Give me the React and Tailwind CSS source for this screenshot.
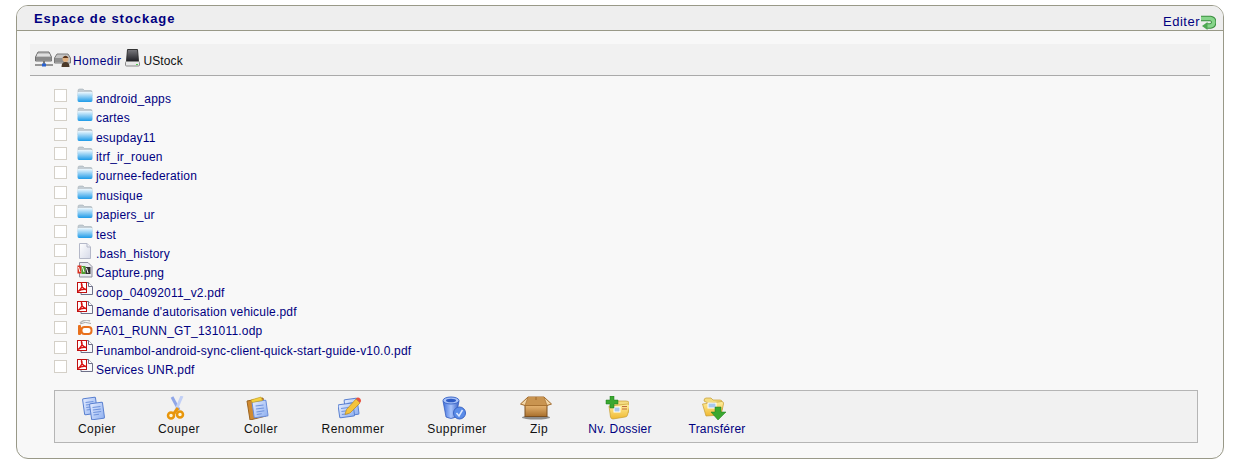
const FONT = "font-['Liberation_Sans',Arial,sans-serif]";

const files = [
  ['android_apps', 'folder'],
  ['cartes', 'folder'],
  ['esupday11', 'folder'],
  ['itrf_ir_rouen', 'folder'],
  ['journee-federation', 'folder'],
  ['musique', 'folder'],
  ['papiers_ur', 'folder'],
  ['test', 'folder'],
  ['.bash_history', 'text'],
  ['Capture.png', 'image'],
  ['coop_04092011_v2.pdf', 'pdf'],
  ["Demande d'autorisation vehicule.pdf", 'pdf'],
  ['FA01_RUNN_GT_131011.odp', 'odp'],
  ['Funambol-android-sync-client-quick-start-guide-v10.0.pdf', 'pdf'],
  ['Services UNR.pdf', 'pdf'],
];

function Gradients() {
  return (
    <svg width="0" height="0" className="absolute">
      <defs>
        <linearGradient id="blueFolder" x1="0" y1="0" x2="0" y2="1">
          <stop offset="0" stopColor="#eef8fe" />
          <stop offset="1" stopColor="#1e9be8" />
        </linearGradient>
        <linearGradient id="sheet" x1="0" y1="0" x2="1" y2="1">
          <stop offset="0" stopColor="#ffffff" />
          <stop offset="1" stopColor="#d5d9e8" />
        </linearGradient>
        <linearGradient id="bluePage" x1="0" y1="0" x2="1" y2="1">
          <stop offset="0" stopColor="#e4ecff" />
          <stop offset="1" stopColor="#8fb0f0" />
        </linearGradient>
        <linearGradient id="binBlue" x1="0" y1="0" x2="1" y2="0">
          <stop offset="0" stopColor="#3f6fdc" />
          <stop offset="0.5" stopColor="#a9c4fb" />
          <stop offset="1" stopColor="#3a62c8" />
        </linearGradient>
        <linearGradient id="box" x1="0" y1="0" x2="0" y2="1">
          <stop offset="0" stopColor="#e9b774" />
          <stop offset="1" stopColor="#a86f2c" />
        </linearGradient>
        <linearGradient id="yellowFolder" x1="0" y1="0" x2="0" y2="1">
          <stop offset="0" stopColor="#fff0a0" />
          <stop offset="1" stopColor="#f0b830" />
        </linearGradient>
        <linearGradient id="drive" x1="0" y1="0" x2="0" y2="1">
          <stop offset="0" stopColor="#7b7b7f" />
          <stop offset="1" stopColor="#1d1d22" />
        </linearGradient>
      </defs>
    </svg>
  );
}

function FileIcon({ type }) {
  if (type === 'folder') {
    return (
      <svg width="16" height="16" viewBox="0 0 16 16">
        <path d="M1 2.500Q1 1 2.500 1H6L7.500 2.500H14Q15 2.500 15 4V8H1Z" fill="#c4cdd4" stroke="#9aa6ae" strokeWidth=".5" />
        <path d="M.5 5Q.5 4 1.500 4H14.500Q15.500 4 15.500 5V12Q15.500 14 14 14H2Q.5 14 .5 12Z" fill="url(#blueFolder)" />
      </svg>
    );
  }
  if (type === 'text') {
    return (
      <svg width="16" height="16" viewBox="0 0 16 16">
        <path d="M2.500.5H10L13.500 4V15.500H2.500Z" fill="url(#sheet)" stroke="#b4b8c8" />
        <path d="M10 .5V4H13.500" fill="#eef0f6" stroke="#b4b8c8" />
      </svg>
    );
  }
  if (type === 'image') {
    return (
      <svg width="16" height="16" viewBox="0 0 16 16">
        <path d="M2.500.5H11L15 4.500V15H2.500Z" fill="#e8e8f0" stroke="#8d8d9c" />
        <rect x=".5" y="3.500" width="4" height="8" fill="#d83020" />
        <rect x="4.500" y="4" width="4" height="8" fill="#50a030" />
        <rect x="8.500" y="5" width="5" height="7" fill="#303030" />
        <path d="M1.500 5L3 10M5.500 5L7 10M9.500 6L11 11" stroke="#fff" />
      </svg>
    );
  }
  if (type === 'pdf') {
    return (
      <svg width="16" height="16" viewBox="0 0 16 16">
        <path d="M4 .5H11.500L15.500 4.500V12.500H4Z" fill="#f7f7fb" stroke="#6e7088" />
        <path d="M11.500.5V4.500H15.500" fill="#fff" stroke="#6e7088" />
        <rect x=".5" y=".5" width="9" height="10" fill="#fff" stroke="#c01010" />
        <path d="M1 9.500C4 7 6 4 4.500 1.500C4 4 6 7 9 7.500C6 7 3 8 1 9.500Z" fill="none" stroke="#d81010" strokeWidth="1.300" />
      </svg>
    );
  }
  return (
    <svg width="16" height="16" viewBox="0 0 16 16">
      <path d="M3 3Q8 -1.500 13 1" fill="none" stroke="#b8b8b8" strokeWidth="1.500" />
      <path d="M3 4Q8 1 14 3.500" fill="none" stroke="#a8a8a8" />
      <rect x="1" y="5" width="3" height="10" rx="1" fill="#e8701c" />
      <rect x="4.500" y="7" width="10" height="7" rx="3" fill="#fff" stroke="#e8701c" strokeWidth="2" />
    </svg>
  );
}

function Server() {
  return (
    <svg width="18" height="16" viewBox="0 0 18 16">
      <path d="M3 1H14L16.500 6V10H.5V6Z" fill="#c0c0c0" stroke="#6f6f6f" />
      <rect x="1" y="6" width="15.500" height="3.500" fill="#8a8a8a" />
      <path d="M2 4H15" stroke="#fff" />
      <path d="M0 14H18" stroke="#777" strokeWidth="1.500" />
      <rect x="8" y="10" width="2" height="3" fill="#777" />
      <rect x="7" y="12.500" width="4" height="3" fill="#2b62d0" />
    </svg>
  );
}

function HomeDrive() {
  return (
    <svg width="17" height="16" viewBox="0 0 17 16">
      <path d="M3 2H14L16.500 6V11H.5V6Z" fill="#c4c4c4" stroke="#7a7a7a" />
      <rect x="1" y="6" width="9" height="4" fill="#8f8f8f" />
      <circle cx="11.500" cy="7" r="3" fill="#e0b080" />
      <path d="M8.500 6Q11.500 1.500 14.500 6Z" fill="#5a3418" />
      <path d="M7.500 15Q7.500 10 11.500 10Q15.500 10 15.500 15Z" fill="#4c3a2a" />
    </svg>
  );
}

function UsbDrive() {
  return (
    <svg width="15" height="18" viewBox="0 0 15 18">
      <path d="M2.500.5H12.500L13.500 12.500H1.500Z" fill="url(#drive)" stroke="#333" />
      <rect x=".5" y="12.500" width="14" height="4.500" rx="1" fill="#e8e8e8" stroke="#8a8a8a" />
      <rect x="11" y="15" width="2" height="1" fill="#50d050" />
    </svg>
  );
}

function EditArrow() {
  return (
    <svg width="15" height="15" viewBox="0 0 15 15" className="mt-[2px]">
      <path d="M0 3.500H9.500A3.800 3.800 0 0 1 9.500 11H5" fill="none" stroke="#3b8f40" strokeWidth="5.500" />
      <path d="M0 3.500H9.500A3.800 3.800 0 0 1 9.500 11H5" fill="none" stroke="#86d48a" strokeWidth="3.500" />
      <path d="M6.500 7V15L1 11Z" fill="#4ea853" />
    </svg>
  );
}

function Page({ x, y }) {
  return (
    <g transform={`translate(${x} ${y}) rotate(-8)`}>
      <rect width="13" height="16" rx="1" fill="url(#bluePage)" stroke="#5a80d0" />
      <path d="M2.500 4H10.500M2.500 6.500H10.500M2.500 9H10.500M2.500 11.500H8" stroke="#6f93dc" />
    </g>
  );
}

function ToolIcon({ name }) {
  if (name === 'copy') {
    return (
      <svg width="24" height="24" viewBox="0 0 24 24">
        <Page x={.5} y={3} />
        <Page x={7.500} y={8} />
      </svg>
    );
  }
  if (name === 'cut') {
    return (
      <svg width="24" height="24" viewBox="-3 0 24 24">
        <path d="M5 1L12 14" stroke="#8fa6e8" strokeWidth="3" />
        <path d="M15 0L9 14" stroke="#c2d0f6" strokeWidth="3" />
        <path d="M11 12L5 20" stroke="#e8960c" strokeWidth="3" />
        <circle cx="4" cy="19.500" r="3" fill="#fff7d8" stroke="#e8960c" strokeWidth="2.500" />
        <circle cx="13" cy="18.500" r="3" fill="#fff7d8" stroke="#e8960c" strokeWidth="2.500" />
      </svg>
    );
  }
  if (name === 'paste') {
    return (
      <svg width="24" height="24" viewBox="0 0 24 24">
        <path d="M1 5L17 2L20 20L4 24Z" fill="#d08a30" stroke="#9c6420" />
        <g transform="translate(6 6) rotate(-8)">
          <rect width="14" height="16" rx="1" fill="url(#bluePage)" stroke="#6c8ed8" />
          <path d="M3 4.500H11M3 7.500H11M3 10.500H11M3 13H8" stroke="#6f93dc" />
        </g>
        <path d="M5 4L15 1L16.500 4.500L6 6.500Z" fill="#f4d040" stroke="#c09a20" strokeWidth=".6" />
      </svg>
    );
  }
  if (name === 'rename') {
    return (
      <svg width="24" height="24" viewBox="0 0 24 24">
        <Page x={6} y={4} />
        <g transform="translate(0 9) rotate(-8)">
          <rect width="15" height="13" rx="1" fill="url(#bluePage)" stroke="#5a80d0" />
          <path d="M2.500 4H12M2.500 7H12M2.500 10H9" stroke="#6f93dc" />
        </g>
        <path d="M18 3L22 7L12 17L7 18.500L8.500 13.500Z" fill="#f5c33c" stroke="#b88a20" strokeWidth=".7" />
        <path d="M18 2.500Q20 .5 22.500 3Q24 5 22 7Z" fill="#e8503c" />
      </svg>
    );
  }
  if (name === 'delete') {
    return (
      <svg width="24" height="24" viewBox="0 0 24 24">
        <path d="M1 5L4 21Q9 24 14 21L17 5Z" fill="url(#binBlue)" stroke="#2d54b8" strokeWidth=".7" />
        <ellipse cx="9" cy="4.500" rx="8" ry="3.500" fill="#a8c2f8" stroke="#3e68c8" />
        <ellipse cx="9" cy="4.500" rx="5" ry="1.800" fill="#2e5bc4" />
        <circle cx="17.500" cy="17" r="6" fill="#5a8ce8" stroke="#3a64c4" />
        <path d="M14.500 17L17 20L20.500 14" fill="none" stroke="#dce8ff" strokeWidth="1.500" />
      </svg>
    );
  }
  if (name === 'zip') {
    return (
      <svg width="32" height="24" viewBox="0 0 32 24">
        <ellipse cx="16" cy="21.500" rx="14" ry="2" fill="#8c8c8c" />
        <rect x="5" y="9" width="22" height="11.500" fill="url(#box)" stroke="#7c5020" />
        <path d="M.5 8L8 1H24L31.500 8L27 9.500H5Z" fill="#f2d6a8" stroke="#a0692a" />
        <path d="M8 1L5 9.500H27L24 1" fill="#c99450" stroke="#a0692a" strokeWidth=".6" />
        <path d="M16 1V4" stroke="#a0692a" />
      </svg>
    );
  }
  if (name === 'newdir') {
    return (
      <svg width="24" height="24" viewBox="-1 0 24 24">
        <path d="M6 8Q6 5 8 5H20Q23 5 23 7L22 17Z" fill="#f4dc80" stroke="#c69c30" strokeWidth=".7" />
        <path d="M3 10L22 8Q24 8 23.500 11L21.500 19Q21 21 19 21L7 23Q5 23 4.500 21Z" fill="url(#yellowFolder)" stroke="#c69c30" strokeWidth=".7" />
        <rect x="8" y="11" width="6" height="5" fill="#a8c8ec" stroke="#fff" />
        <path d="M16 10.500H21M16 13H21" stroke="#c06c40" />
        <path d="M4 0H8V4H12V8H8V12H4V8H0V4H4Z" fill="#3aa830" stroke="#1f7a1c" strokeWidth=".5" />
      </svg>
    );
  }
  return (
    <svg width="24" height="24" viewBox="0 0 24 24">
      <path d="M2 5Q2 2 4 2H9L11 4H18Q20 4 20 6V14Z" fill="#f4dc80" stroke="#c69c30" strokeWidth=".7" />
      <path d="M.5 8L20 5.500Q22 6 21.500 8L19 19L4 20Z" fill="url(#yellowFolder)" stroke="#c69c30" strokeWidth=".7" />
      <rect x="6" y="7" width="8" height="5" fill="#a8c8ec" stroke="#fff" />
      <path d="M13 11H19V16H24L16 24L9 16H13Z" fill="#3aa830" stroke="#1f7a1c" strokeWidth=".5" />
    </svg>
  );
}

const tools = [
  ['copy', 'Copier', 'w-[84px] text-[#111]'],
  ['cut', 'Couper', 'w-[80px] text-[#111]'],
  ['paste', 'Coller', 'w-[84px] text-[#111]'],
  ['rename', 'Renommer', 'w-[100px] text-[#111]'],
  ['delete', 'Supprimer', 'w-[108px] text-[#111]'],
  ['zip', 'Zip', 'w-[56px] text-[#111]'],
  ['newdir', 'Nv. Dossier', 'w-[106px] text-[#000080] tracking-[0.2px]'],
  ['upload', 'Transférer', 'w-[88px] text-[#000080] tracking-[0.2px]'],
];

export default function App() {
  return (
    <div className={`${FONT} w-[1237px] h-[464px] overflow-hidden bg-white pt-[5px] pl-4 text-xs tracking-[0.2px]`}>
      <Gradients />
      <div className="w-[1208px] h-[454px] rounded-[12px] border border-[#999988] bg-[#f8f8f8] overflow-hidden">
        <div className="h-[25px] bg-[#eeeeee] border-b border-[#999988] flex items-start justify-between pl-[17px] pr-[7px]">
          <h1 className="text-[13px] font-bold tracking-[0.95px] text-[#000080] leading-[26px]">Espace de stockage</h1>
          <div className="flex items-start mt-[7px] text-[13px] tracking-[0.5px] leading-[17px] text-[#000080]">
            <span className="mr-[1px]">Editer</span>
            <EditArrow />
          </div>
        </div>

        <div className="mt-[13px] mx-[13px] h-[32px] bg-[#f1f1f1] border-b border-[#aaaaaa] flex items-start pl-[5px] pt-[7px]">
          <Server />
          <span className="ml-px mt-px"><HomeDrive /></span>
          <span className="ml-[2px] mt-[2px] text-[#000080] leading-[16px] tracking-[0.45px]">Homedir</span>
          <span className="ml-[3px] -mt-[2px]"><UsbDrive /></span>
          <span className="ml-[4px] mt-[2px] text-[#111] leading-[16px] tracking-[0.1px]">UStock</span>
        </div>

        <ul className="mt-[13px] ml-[37px]">
          {files.map(([name, type]) => (
            <li key={name} className="h-[19.36px] flex items-start">
              <span className="w-[13px] h-[13px] border border-[#d4d0c8] bg-white shrink-0" />
              <span className="ml-[10px] w-[16px] -mt-[1px] shrink-0"><FileIcon type={type} /></span>
              <span className="ml-[3px] mt-[3px] leading-[15px] whitespace-nowrap text-[#000080]">{name}</span>
            </li>
          ))}
        </ul>

        <div className="mt-[11px] ml-[37px] w-[1144px] h-[53px] bg-[#f1f1f1] border border-[#b5b5b5] flex items-start tracking-[0.45px]">
          {tools.map(([icon, label, cls]) => (
            <div key={label} className={`${cls} pt-[5px] flex flex-col items-center shrink-0`}>
              <span className="mr-[6px] h-[24px]"><ToolIcon name={icon} /></span>
              <span className="mt-[2px] leading-[15px] whitespace-nowrap">{label}</span>
            </div>
          ))}
        </div>
      </div>
    </div>
  );
}
